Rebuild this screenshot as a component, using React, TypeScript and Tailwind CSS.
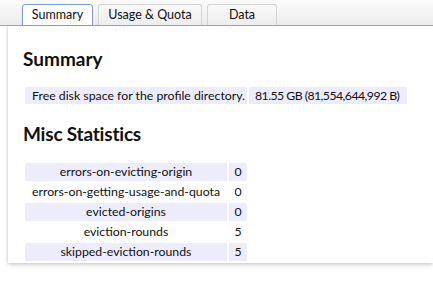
import React from "react";

const font = { fontFamily: 'Lato, "Open Sans", sans-serif' };

const stats: [string, string][] = [
  ["errors-on-evicting-origin", "0"],
  ["errors-on-getting-usage-and-quota", "0"],
  ["evicted-origins", "0"],
  ["eviction-rounds", "5"],
  ["skipped-eviction-rounds", "5"],
];

export default function App() {
  return (
    <div
      className="w-[433px] h-[290px] bg-white overflow-hidden text-[#111]"
      style={font}
    >
      <div className="h-[26px] flex items-end gap-[5px] pl-[22px] bg-gradient-to-b from-[#fbfbfb] to-[#ececec] border-b border-[#a8a8a8]">
        <div className="w-[71px] h-[22px] mb-[-1px] flex items-center justify-center bg-white border border-[#7d9bd6] rounded-t-[3px] text-[12.5px]">
          Summary
        </div>
        <div className="w-[104px] h-[21px] flex items-center justify-center bg-gradient-to-b from-[#fafafa] to-[#ededed] border border-b-0 border-[#d4d4d4] rounded-t-[3px] text-[12.5px]">
          Usage &amp; Quota
        </div>
        <div className="w-[70px] h-[21px] flex items-center justify-center bg-gradient-to-b from-[#fafafa] to-[#ededed] border border-b-0 border-[#d4d4d4] rounded-t-[3px] text-[12.5px]">
          Data
        </div>
      </div>
      <div className="ml-[8px] bg-white shadow-[0_2px_4px_rgba(0,0,0,0.18),-1px_0_2px_rgba(0,0,0,0.06)] pl-[15px] pt-[22px]">
        <h2 className="text-[19px] leading-[22px] font-bold">Summary</h2>
        <table className="w-[386px] mt-[15px] table-fixed border-separate border-spacing-[2px] text-[12.3px]">
          <tbody>
            <tr>
              <td className="w-[222px] h-[17px] bg-[#ececfb] pl-[7px] leading-[16px] whitespace-nowrap overflow-hidden">
                Free disk space for the profile directory.
              </td>
              <td className="w-[158px] h-[17px] bg-[#ececfb] pl-[6px] leading-[16px] whitespace-nowrap overflow-hidden tracking-[-0.55px]">
                81.55 GB (81,554,644,992 B)
              </td>
            </tr>
          </tbody>
        </table>
        <h2 className="mt-[17px] text-[19px] leading-[22px] font-bold tracking-[-0.2px]">Misc Statistics</h2>
        <table className="w-[226px] mt-[16px] table-fixed border-separate border-spacing-[2px] text-[12.3px]">
          <tbody>
            {stats.map(([k, v], i) => (
              <tr key={k}>
                <td
                  className={`w-[202px] h-[18px] text-center leading-[16px] whitespace-nowrap overflow-hidden ${
                    i % 2 === 0 ? "bg-[#ececfb]" : "bg-white"
                  }`}
                >
                  {k}
                </td>
                <td
                  className={`w-[18px] h-[18px] text-center leading-[16px] ${
                    i % 2 === 0 ? "bg-[#ececfb]" : "bg-white"
                  }`}
                >
                  {v}
                </td>
              </tr>
            ))}
          </tbody>
        </table>
      </div>
    </div>
  );
}
